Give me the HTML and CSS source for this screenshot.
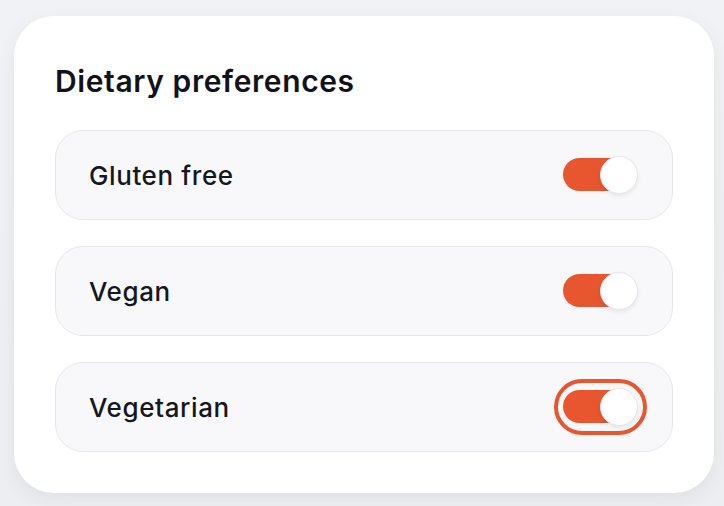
FILE: index.html
```html
<!DOCTYPE html>
<html lang="en">
<head>
  <meta charset="UTF-8">
  <title>Dietary preferences</title>
  <meta name="viewport" content="width=device-width, initial-scale=1.0">
  <link rel="stylesheet" href="styles.css">
</head>
<body>
  <div class="card">
    <h2 class="title">Dietary preferences</h2>

    <div class="options">
      <label class="option">
        <span class="option-label">Gluten free</span>
        <span class="toggle" role="switch" aria-checked="true">
          <span class="track"></span>
          <span class="knob"></span>
        </span>
      </label>

      <label class="option">
        <span class="option-label">Vegan</span>
        <span class="toggle" role="switch" aria-checked="true">
          <span class="track"></span>
          <span class="knob"></span>
        </span>
      </label>

      <label class="option">
        <span class="option-label">Vegetarian</span>
        <span class="toggle focused" role="switch" aria-checked="true">
          <span class="track"></span>
          <span class="knob"></span>
        </span>
      </label>
    </div>
  </div>
</body>
</html>
```

FILE: styles.css
```css
body {
  font-family: Inter, "Noto Sans", sans-serif;
  background: linear-gradient(180deg, #f1f2f5 0%, #eceef1 100%);
  margin: 0;
  padding: 16px 10px 0 14px;
  height: 506px;
  box-sizing: border-box;
  color: #14161d;
}
.card {
  background: #fff;
  width: 700px;
  height: 477px;
  box-sizing: border-box;
  padding: 41px;
  border-radius: 40px;
  box-shadow: 0 6px 20px rgba(20, 24, 40, 0.06);
}
.title {
  margin: 0 0 25px;
  font-size: 30px;
  line-height: 48px;
  font-weight: 600;
  letter-spacing: 0.6px;
  color: #11131a;
}
.options {
  display: flex;
  flex-direction: column;
  gap: 26px;
}
.option {
  display: flex;
  align-items: center;
  justify-content: space-between;
  height: 90px;
  box-sizing: border-box;
  padding: 0 34px 0 33px;
  background: #f8f8fa;
  border: 1px solid #e6e7eb;
  border-radius: 28px;
}
.option-label {
  font-size: 26px;
  font-weight: 500;
  letter-spacing: 0.6px;
  color: #16171e;
}
.toggle {
  position: relative;
  width: 75px;
  height: 38px;
  border-radius: 999px;
}
.toggle .track {
  position: absolute;
  left: 0;
  top: 2px;
  width: 68px;
  height: 33px;
  border-radius: 999px;
  background: #e8562f;
}
.toggle .knob {
  position: absolute;
  right: 0;
  top: 0;
  width: 38px;
  height: 38px;
  box-sizing: border-box;
  border-radius: 50%;
  background: #fff;
  border: 1px solid #e7e7eb;
  box-shadow: 0 2px 4px rgba(0, 0, 0, 0.08);
}
.toggle.focused {
  outline: 4px solid #e8562f;
  outline-offset: 5px;
}
```
